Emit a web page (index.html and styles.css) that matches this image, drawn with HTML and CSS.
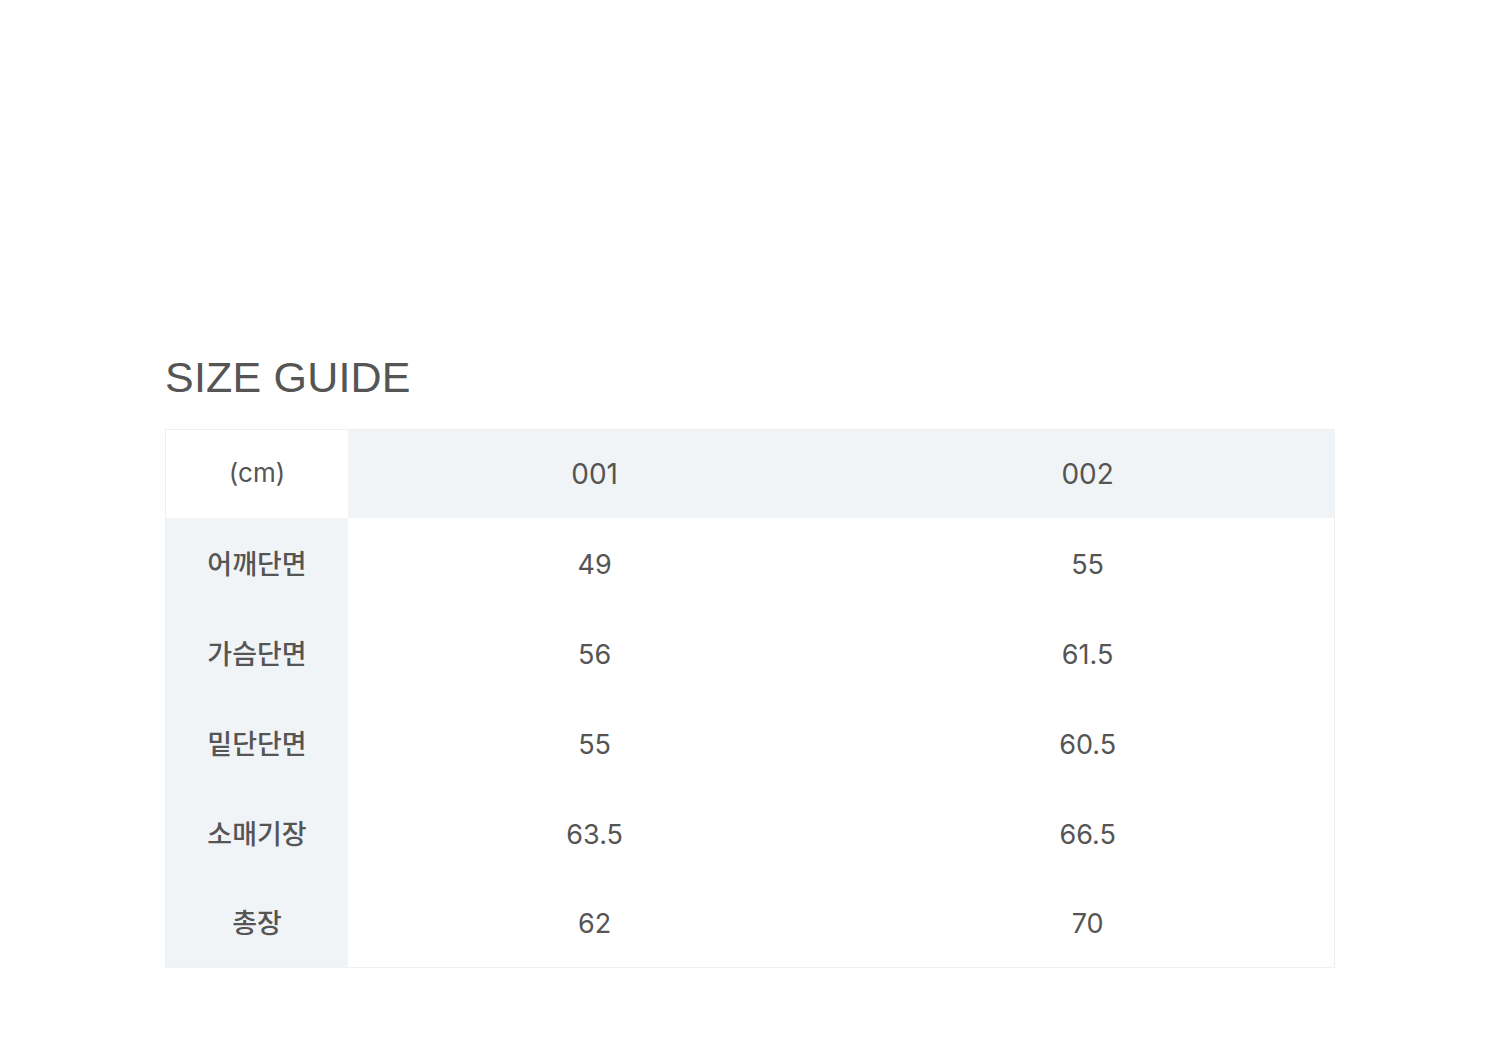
FILE: index.html
```html
<!DOCTYPE html>
<html lang="ko">
<head>
<meta charset="utf-8">
<title>SIZE GUIDE</title>
<link rel="stylesheet" href="styles.css">
</head>
<body>
<section class="guide">
  <h2 class="guide-title">SIZE GUIDE</h2>
  <table class="size-table">
    <thead>
      <tr class="head-row">
        <th class="unit">(cm)</th>
        <th class="size">001</th>
        <th class="size">002</th>
      </tr>
    </thead>
    <tbody>
      <tr class="body-row"><th>어깨단면</th><td>49</td><td>55</td></tr>
      <tr class="body-row"><th>가슴단면</th><td>56</td><td>61.5</td></tr>
      <tr class="body-row"><th>밑단단면</th><td>55</td><td>60.5</td></tr>
      <tr class="body-row"><th>소매기장</th><td>63.5</td><td>66.5</td></tr>
      <tr class="body-row"><th>총장</th><td>62</td><td>70</td></tr>
    </tbody>
  </table>
</section>
</body>
</html>
```

FILE: styles.css
```css
html, body {
  margin: 0;
  padding: 0;
  background: #ffffff;
}

body {
  font-family: "Liberation Sans", "Noto Sans CJK KR", sans-serif;
  color: #555555;
}

.guide {
  padding: 351px 165px 0 165px;
}

.guide-title {
  margin: 0 0 26px 0;
  font-family: "Liberation Sans", sans-serif;
  font-weight: 400;
  font-size: 43px;
  line-height: 52px;
  letter-spacing: 0.2px;
  color: #555555;
}

.size-table {
  width: 1170px;
  border-collapse: collapse;
  table-layout: fixed;
  border: 1px solid #eef0f2;
}

.head-row {
  height: 88px;
}

.body-row {
  height: 90px;
}

.size-table th,
.size-table td {
  padding: 0;
  text-align: center;
  vertical-align: middle;
  font-weight: 400;
  font-family: "Inter", "Noto Sans CJK KR", sans-serif;
  font-size: 27px;
  line-height: 36px;
  color: #555555;
}

.size-table thead th {
  background: #f1f4f7;
  font-size: 28px;
  padding-top: 0;
}

.size-table thead th.unit {
  width: 182px;
  background: #ffffff;
  font-size: 26px;
  padding-bottom: 2px;
}

.size-table tbody th {
  background: #f1f4f7;
  font-family: "Noto Sans CJK KR", sans-serif;
  font-weight: 500;
  font-size: 27px;
  padding-top: 0;
}

.size-table tbody td {
  background: #ffffff;
  font-size: 27px;
  padding-top: 4px;
}
```
